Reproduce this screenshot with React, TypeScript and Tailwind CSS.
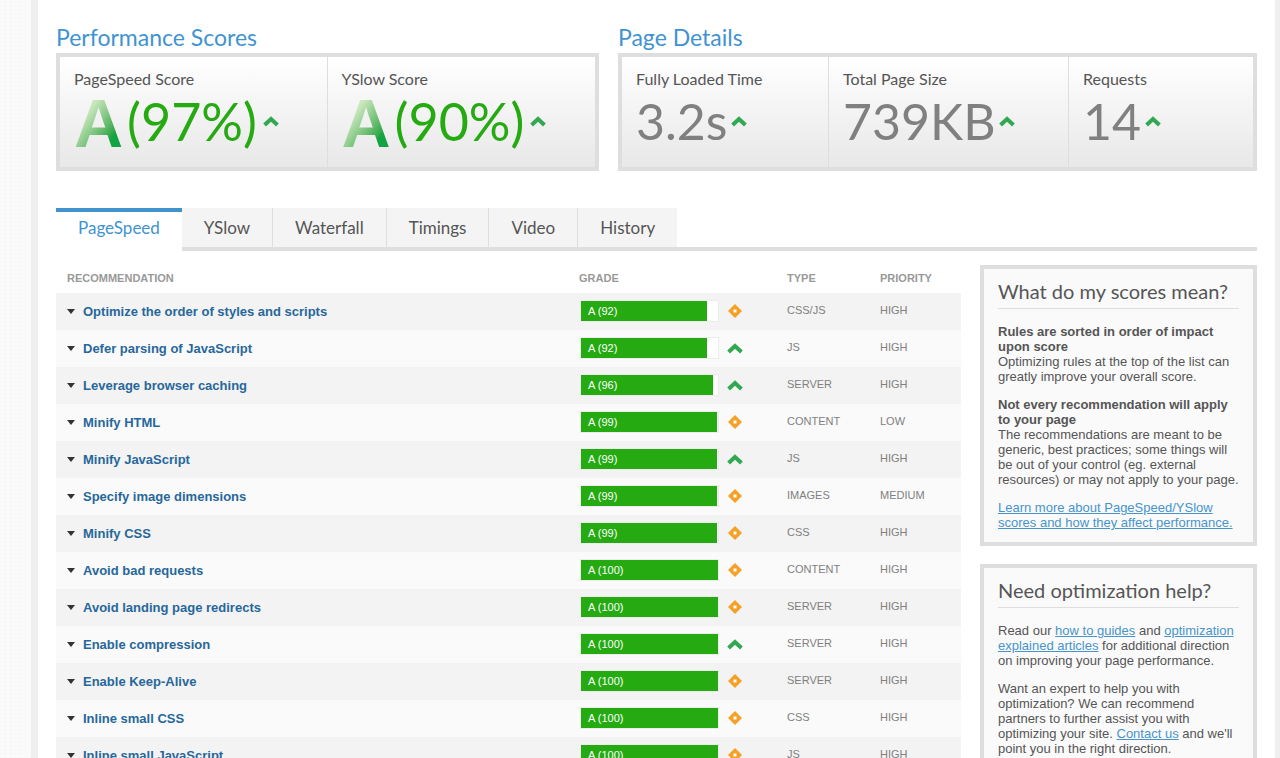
import React from "react";

type Trend = "up" | "same";

type Rule = {
  name: string;
  score: number;
  trend: Trend;
  type: string;
  priority: string;
};

const tabs = ["PageSpeed", "YSlow", "Waterfall", "Timings", "Video", "History"];

const rules: Rule[] = [
  { name: "Optimize the order of styles and scripts", score: 92, trend: "same", type: "CSS/JS", priority: "HIGH" },
  { name: "Defer parsing of JavaScript", score: 92, trend: "up", type: "JS", priority: "HIGH" },
  { name: "Leverage browser caching", score: 96, trend: "up", type: "SERVER", priority: "HIGH" },
  { name: "Minify HTML", score: 99, trend: "same", type: "CONTENT", priority: "LOW" },
  { name: "Minify JavaScript", score: 99, trend: "up", type: "JS", priority: "HIGH" },
  { name: "Specify image dimensions", score: 99, trend: "same", type: "IMAGES", priority: "MEDIUM" },
  { name: "Minify CSS", score: 99, trend: "same", type: "CSS", priority: "HIGH" },
  { name: "Avoid bad requests", score: 100, trend: "same", type: "CONTENT", priority: "HIGH" },
  { name: "Avoid landing page redirects", score: 100, trend: "same", type: "SERVER", priority: "HIGH" },
  { name: "Enable compression", score: 100, trend: "up", type: "SERVER", priority: "HIGH" },
  { name: "Enable Keep-Alive", score: 100, trend: "same", type: "SERVER", priority: "HIGH" },
  { name: "Inline small CSS", score: 100, trend: "same", type: "CSS", priority: "HIGH" },
  { name: "Inline small JavaScript", score: 100, trend: "same", type: "JS", priority: "HIGH" },
];

function UpIcon() {
  return (
    <svg className="shrink-0" width="16" height="12" viewBox="0 0 16 12" fill="none">
      <path d="M1.6 10 L8 4 L14.4 10" stroke="#32a852" strokeWidth="4" />
    </svg>
  );
}

function SameIcon() {
  return (
    <svg className="shrink-0" width="16" height="16" viewBox="0 0 16 16">
      <path d="M8 1 L15 8 L8 15 L1 8 Z" fill="#f5a027" />
      <rect x="6.5" y="6.5" width="3" height="3" fill="#fff" />
    </svg>
  );
}

function Score({ label, value }: { label: string; value: string }) {
  return (
    <div className="px-3.5 pt-2.5">
      <h3 className="text-base leading-6 text-[#555]">{label}</h3>
      <div className="flex items-center h-16">
        <span className="bg-gradient-to-br from-[#c9e7bd] from-30% to-[#12a342] to-75% bg-clip-text font-['Liberation_Sans',sans-serif] text-[68px] leading-16 font-bold text-transparent">
          A
        </span>
        <span className="flex items-center gap-1.5 pb-1 pl-1 text-[52px] leading-16 text-[#25aa12]">
          {value}
          <UpIcon />
        </span>
      </div>
    </div>
  );
}

function Detail({ label, value }: { label: string; value: string }) {
  return (
    <div className="px-3.5 pt-2.5">
      <h3 className="text-base leading-6 text-[#555]">{label}</h3>
      <div className="flex items-center h-16">
        <span className="flex items-center gap-1 pb-1 text-[50px] leading-16 text-[#808080]">
          {value}
          <UpIcon />
        </span>
      </div>
    </div>
  );
}

function Tip({ title, children }: { title: string; children: React.ReactNode }) {
  return (
    <section className="border-4 border-[#dedede] bg-[#fafafa] px-3.5 pt-2.5 pb-3">
      <h2 className="mb-[15px] border-b border-[#dedede] pb-1 font-[Lato,sans-serif] text-xl leading-[25px] text-[#555]">{title}</h2>
      <div className="flex flex-col gap-[13px] text-[13px] leading-[15px] text-[#555]">{children}</div>
    </section>
  );
}

function Link({ children }: { children: React.ReactNode }) {
  return (
    <a href="#" className="text-[#4794cc] underline">
      {children}
    </a>
  );
}

function App() {
  return (
    <div className="min-h-screen bg-[#fbfbfb] bg-[repeating-linear-gradient(0deg,#f8f8f8_0_1px,transparent_1px_4px),repeating-linear-gradient(90deg,#f8f8f8_0_1px,transparent_1px_5px)] pl-[31px] font-['Liberation_Sans',Arial,sans-serif]">
      <main className="min-h-screen border-l-[7px] border-r-[5px] border-[#efefef] bg-white px-[18px] pt-[23px]">
        <div className="grid grid-cols-[543fr_639fr] gap-[19px] font-[Lato,sans-serif]">
          <section>
            <h2 className="pb-0.5 text-[23px] leading-7 text-[#3f93d2]">Performance Scores</h2>
            <div className="grid grid-cols-2 divide-x divide-[#dedede] border-4 border-[#dedede] bg-gradient-to-b from-white to-[#e8e8e8] h-[118px]">
              <Score label="PageSpeed Score" value="(97%)" />
              <Score label="YSlow Score" value="(90%)" />
            </div>
          </section>
          <section>
            <h2 className="pb-0.5 text-[23px] leading-7 text-[#3f93d2]">Page Details</h2>
            <div className="grid grid-cols-[207fr_240fr_184fr] divide-x divide-[#dedede] border-4 border-[#dedede] bg-gradient-to-b from-white to-[#e8e8e8] h-[118px]">
              <Detail label="Fully Loaded Time" value="3.2s" />
              <Detail label="Total Page Size" value="739KB" />
              <Detail label="Requests" value="14" />
            </div>
          </section>
        </div>

        <nav className="mt-[37px] flex font-[Lato,sans-serif] text-[17px]">
          {tabs.map((tab, i) =>
            i === 0 ? (
              <button key={tab} className="h-[43px] border-t-4 border-[#4193cc] px-[22px] pb-2 text-[#3f93d2]">
                {tab}
              </button>
            ) : (
              <button
                key={tab}
                className="h-[43px] border-b-4 border-b-[#dedede] border-r border-r-[#dedede] bg-[#f4f4f4] px-[22px] text-[#555] nth-last-2:border-r-0"
              >
                {tab}
              </button>
            )
          )}
          <div className="grow border-b-4 border-[#dedede]"></div>
        </nav>

        <div className="flex items-start gap-[19px] pt-3.5">
          <table className="grow table-fixed text-left">
            <thead>
              <tr className="h-7 text-[11px] text-[#999]">
                <th className="pb-0.5 pl-[11px]">RECOMMENDATION</th>
                <th className="w-[208px] pb-0.5">GRADE</th>
                <th className="w-[93px] pb-0.5">TYPE</th>
                <th className="w-[81px] pb-0.5">PRIORITY</th>
              </tr>
            </thead>
            <tbody>
              {rules.map((rule) => (
                <tr key={rule.name} className="h-[37px] bg-[#fafafa] odd:bg-[#f3f3f3] text-[11px] text-[#808080]">
                  <td className="pl-[11px]">
                    <a href="#" className="flex items-center gap-2 text-[13px] font-bold text-[#27679b]">
                      <svg width="8" height="5" viewBox="0 0 8 5">
                        <path d="M0 0 H8 L4 5 Z" fill="#333" />
                      </svg>
                      {rule.name}
                    </a>
                  </td>
                  <td>
                    <div className="flex items-center gap-2 pb-px pl-px">
                      <div className="w-[139px] border border-[#ececec] bg-white">
                        <div className="h-5 bg-[#25aa12] pl-[7px] leading-5 text-white" style={{ width: `${rule.score}%` }}>
                          A ({rule.score})
                        </div>
                      </div>
                      {rule.trend === "up" ? <UpIcon /> : <SameIcon />}
                    </div>
                  </td>
                  <td className="pb-0.5">{rule.type}</td>
                  <td className="pb-0.5">{rule.priority}</td>
                </tr>
              ))}
            </tbody>
          </table>

          <aside className="flex w-[277px] shrink-0 flex-col gap-[18px]">
            <Tip title="What do my scores mean?">
              <p>
                <strong>Rules are sorted in order of impact upon score</strong>
                <br />
                Optimizing rules at the top of the list can greatly improve your overall score.
              </p>
              <p>
                <strong>Not every recommendation will apply to your page</strong>
                <br />
                The recommendations are meant to be generic, best practices; some things will be out of your control (eg.
                external resources) or may not apply to your page.
              </p>
              <p>
                <Link>Learn more about PageSpeed/YSlow scores and how they affect performance.</Link>
              </p>
            </Tip>
            <Tip title="Need optimization help?">
              <p>
                Read our <Link>how to guides</Link> and <Link>optimization explained articles</Link> for additional direction
                on improving your page performance.
              </p>
              <p>
                Want an expert to help you with optimization? We can recommend partners to further assist you with
                optimizing your site. <Link>Contact us</Link> and we'll point you in the right direction.
              </p>
            </Tip>
          </aside>
        </div>
      </main>
    </div>
  );
}

export default App;
